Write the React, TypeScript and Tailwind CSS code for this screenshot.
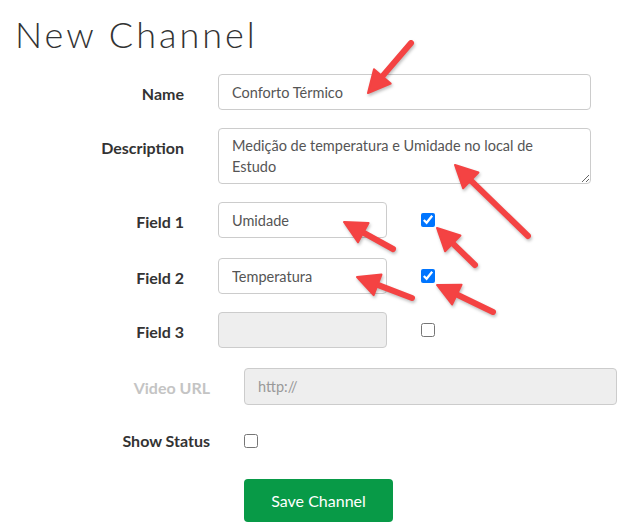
import React from 'react'

const sans = "font-['Lato','Liberation_Sans',sans-serif]"

// annotation arrows: tail -> tip
const arrows = [
  [411, 43, 368, 93],
  [528, 236, 455, 165],
  [393, 249, 344, 222],
  [475, 265, 437, 228],
  [412, 298, 357, 277],
  [493, 312, 437, 285],
]

function Arrow({ x1, y1, x2, y2 }: { x1: number; y1: number; x2: number; y2: number }) {
  const dx = x2 - x1
  const dy = y2 - y1
  const len = Math.hypot(dx, dy)
  const ux = dx / len
  const uy = dy / len
  const headLen = 22
  const half = 11
  const bx = x2 - ux * headLen
  const by = y2 - uy * headLen
  const pts = [
    [x2, y2],
    [bx - uy * half, by + ux * half],
    [bx + uy * half, by - ux * half],
  ]
    .map((p) => p.join(','))
    .join(' ')
  return (
    <g>
      <line x1={x1} y1={y1} x2={bx + ux * 4} y2={by + uy * 4} stroke="#f44343" strokeWidth={6} strokeLinecap="round" />
      <polygon points={pts} fill="#f44343" stroke="#f44343" strokeWidth={2} strokeLinejoin="round" />
    </g>
  )
}

function Label({ children, muted }: { children: React.ReactNode; muted?: boolean }) {
  return (
    <label className={`pt-[8px] text-right text-[16px] leading-[24px] font-bold ${muted ? 'text-[#c4c4c4]' : 'text-[#333]'}`}>
      {children}
    </label>
  )
}

const inputCls =
  'h-[36px] rounded-[4px] border border-[#ccc] px-[13px] text-[14.5px] text-[#555] outline-none'

export default function App() {
  return (
    <div className={`relative w-[631px] h-[532px] bg-white overflow-hidden ${sans}`}>
      <h1 className="mt-[14px] ml-[15px] text-[36px] leading-[40px] font-light tracking-[3px] text-[#333]">
        New Channel
      </h1>

      {/* main fields */}
      <div className="mt-[20px] grid grid-cols-[184px_1fr] gap-x-[34px]">
        <Label>Name</Label>
        <input className={`${inputCls} w-[373px]`} defaultValue="Conforto Térmico" />

        <div className="h-[18px] col-span-2" />
        <Label>Description</Label>
        <textarea
          className="w-[373px] h-[56px] rounded-[4px] border border-[#ccc] pl-[13px] pr-[30px] pt-[6px] text-[14.5px] leading-[21px] text-[#555] outline-none"
          defaultValue="Medição de temperatura e Umidade no local de Estudo"
        />

        <div className="h-[18px] col-span-2" />
        <Label>Field 1</Label>
        <div className="flex items-center gap-[34px]">
          <input className={`${inputCls} w-[169px]`} defaultValue="Umidade" />
          <input type="checkbox" defaultChecked className="w-[14px] h-[14px] accent-[#0075ff]" />
        </div>

        <div className="h-[20px] col-span-2" />
        <Label>Field 2</Label>
        <div className="flex items-center gap-[34px]">
          <input className={`${inputCls} w-[169px]`} defaultValue="Temperatura" />
          <input type="checkbox" defaultChecked className="w-[14px] h-[14px] accent-[#0075ff]" />
        </div>

        <div className="h-[18px] col-span-2" />
        <Label>Field 3</Label>
        <div className="flex items-center gap-[34px]">
          <input className={`${inputCls} w-[169px] bg-[#eee]`} disabled />
          <input type="checkbox" className="w-[14px] h-[14px]" />
        </div>
      </div>

      {/* secondary fields */}
      <div className="mt-[20px] grid grid-cols-[210px_1fr] gap-x-[34px]">
        <Label muted>Video URL</Label>
        <input
          className={`${inputCls} w-[373px] h-[37px] bg-[#eee] placeholder:text-[#999]`}
          placeholder="http://"
          disabled
        />

        <div className="h-[16px] col-span-2" />
        <Label>Show Status</Label>
        <div className="flex items-center h-[40px]">
          <input type="checkbox" className="w-[14px] h-[14px]" />
        </div>

        <div className="h-[18px] col-span-2" />
        <div />
        <button className="w-[149px] h-[43px] rounded-[4px] bg-[#089a47] text-white text-[16px]">
          Save Channel
        </button>
      </div>

      {/* annotations */}
      <svg className="absolute inset-0 pointer-events-none" width={631} height={532} style={{ filter: 'drop-shadow(1px 2px 1.5px rgba(0,0,0,0.25))' }}>
        {arrows.map(([x1, y1, x2, y2], i) => (
          <Arrow key={i} x1={x1} y1={y1} x2={x2} y2={y2} />
        ))}
      </svg>
    </div>
  )
}
